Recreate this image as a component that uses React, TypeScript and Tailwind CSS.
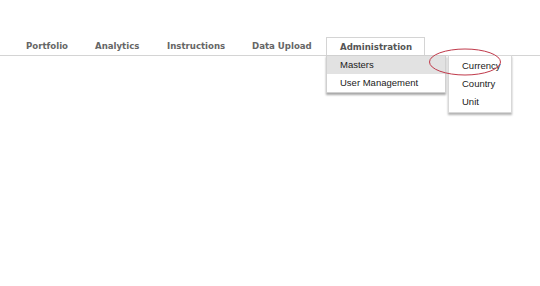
import React from 'react';

const tabs = [
  { label: 'Portfolio', width: 'w-[69px]' },
  { label: 'Analytics', width: 'w-[72px]' },
  { label: 'Instructions', width: 'w-[85px]' },
  { label: 'Data Upload', width: 'w-[87px]' },
];

const App: React.FC = () => {
  return (
    <div className="w-[540px] h-[286px] bg-white overflow-hidden relative">
      <div className="pt-[37px] border-b border-[#d4d4d4]">
        <nav className="flex pl-[13px] h-[18px] font-['DejaVu_Sans',sans-serif] font-bold text-[8.6px] text-[#666]">
          {tabs.map((t) => (
            <div key={t.label} className={`${t.width} pl-[13px] flex items-center`}>
              {t.label}
            </div>
          ))}
          <div className="relative w-[99px] pl-[13px] flex items-center bg-white border border-b-0 border-[#d4d4d4] -mb-px text-[#555]">
            Administration
            <div className="absolute left-[-1px] top-[17px] w-[120px] bg-white border border-[#d0d0d0] shadow-[0_2px_2px_rgba(0,0,0,0.35)] font-['Liberation_Sans',Arial,sans-serif] font-normal text-[9.5px] text-[#1a1a1a] z-10">
              <div className="h-[18px] flex items-center pl-[13px] bg-[#e2e2e2]">Masters</div>
              <div className="h-[18px] flex items-center pl-[13px]">User Management</div>
            </div>
            <div className="absolute left-[121px] top-[17px] w-[64px] h-[58px] bg-white border border-[#d8d8d8] shadow-[0_2px_2px_rgba(0,0,0,0.3)] font-['Liberation_Sans',Arial,sans-serif] font-normal text-[9.5px] text-[#1a1a1a] pt-[1px] z-10">
              <div className="h-[18px] flex items-center pl-[13px]">Currency</div>
              <div className="h-[18px] flex items-center pl-[13px]">Country</div>
              <div className="h-[18px] flex items-center pl-[13px]">Unit</div>
            </div>
            <svg className="absolute left-[101px] top-[9px] z-20" width="76" height="30" viewBox="0 0 76 30">
              <ellipse cx="37" cy="15" rx="35.5" ry="13" fill="none" stroke="#c0394a" strokeWidth="1" />
            </svg>
          </div>
        </nav>
      </div>
    </div>
  );
};

export default App;
